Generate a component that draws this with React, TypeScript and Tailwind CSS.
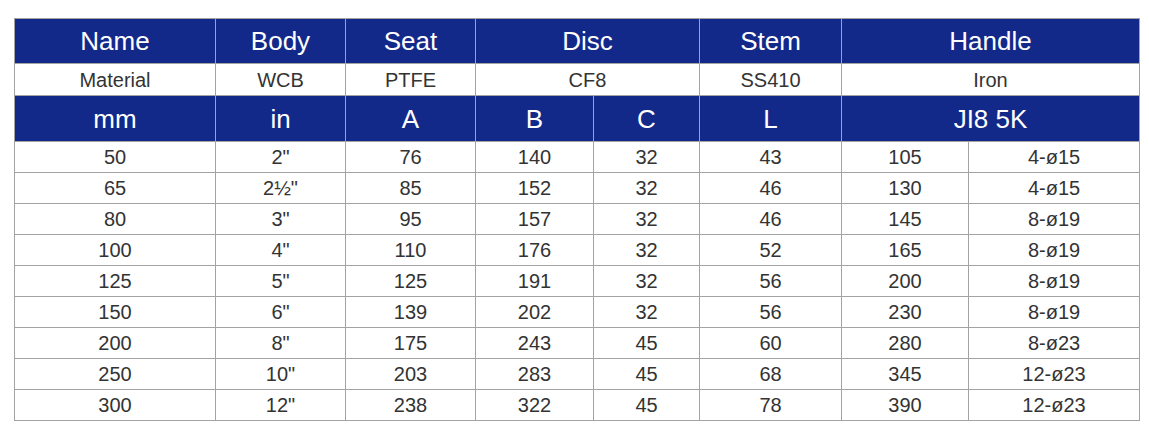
const rows = [
  ['50', '2"', '76', '140', '32', '43', '105', '4-ø15'],
  ['65', '2½"', '85', '152', '32', '46', '130', '4-ø15'],
  ['80', '3"', '95', '157', '32', '46', '145', '8-ø19'],
  ['100', '4"', '110', '176', '32', '52', '165', '8-ø19'],
  ['125', '5"', '125', '191', '32', '56', '200', '8-ø19'],
  ['150', '6"', '139', '202', '32', '56', '230', '8-ø19'],
  ['200', '8"', '175', '243', '45', '60', '280', '8-ø23'],
  ['250', '10"', '203', '283', '45', '68', '345', '12-ø23'],
  ['300', '12"', '238', '322', '45', '78', '390', '12-ø23'],
];

const head = 'border border-[#a3a3a3] bg-[#13298a] text-white text-[26px] font-normal p-0 text-center';
const cell = 'border border-[#a3a3a3] text-[#333333] text-[20px] p-0 text-center';

export default function App() {
  return (
    <div className="min-h-screen bg-white pt-[18px] pl-[14px] font-['Liberation_Sans',Arial,sans-serif]">
      <table className="table-fixed border-collapse w-[1125px] leading-none">
        <colgroup>
          <col className="w-[201px]" />
          <col className="w-[130px]" />
          <col className="w-[130px]" />
          <col className="w-[118px]" />
          <col className="w-[106px]" />
          <col className="w-[142px]" />
          <col className="w-[127px]" />
          <col className="w-[171px]" />
        </colgroup>
        <thead>
          <tr className="h-[45px]">
            <th className={head}>Name</th>
            <th className={head}>Body</th>
            <th className={head}>Seat</th>
            <th className={head} colSpan={2}>Disc</th>
            <th className={head}>Stem</th>
            <th className={head} colSpan={2}>Handle</th>
          </tr>
          <tr className="h-[32px]">
            <td className={cell}>Material</td>
            <td className={cell}>WCB</td>
            <td className={cell}>PTFE</td>
            <td className={cell} colSpan={2}>CF8</td>
            <td className={cell}>SS410</td>
            <td className={cell} colSpan={2}>Iron</td>
          </tr>
          <tr className="h-[46px]">
            <th className={head}>mm</th>
            <th className={head}>in</th>
            <th className={head}>A</th>
            <th className={head}>B</th>
            <th className={head}>C</th>
            <th className={head}>L</th>
            <th className={head} colSpan={2}>JI8 5K</th>
          </tr>
        </thead>
        <tbody>
          {rows.map((r) => (
            <tr key={r[0]} className="h-[31px]">
              {r.map((v, i) => (
                <td key={i} className={cell}>{v}</td>
              ))}
            </tr>
          ))}
        </tbody>
      </table>
    </div>
  );
}
